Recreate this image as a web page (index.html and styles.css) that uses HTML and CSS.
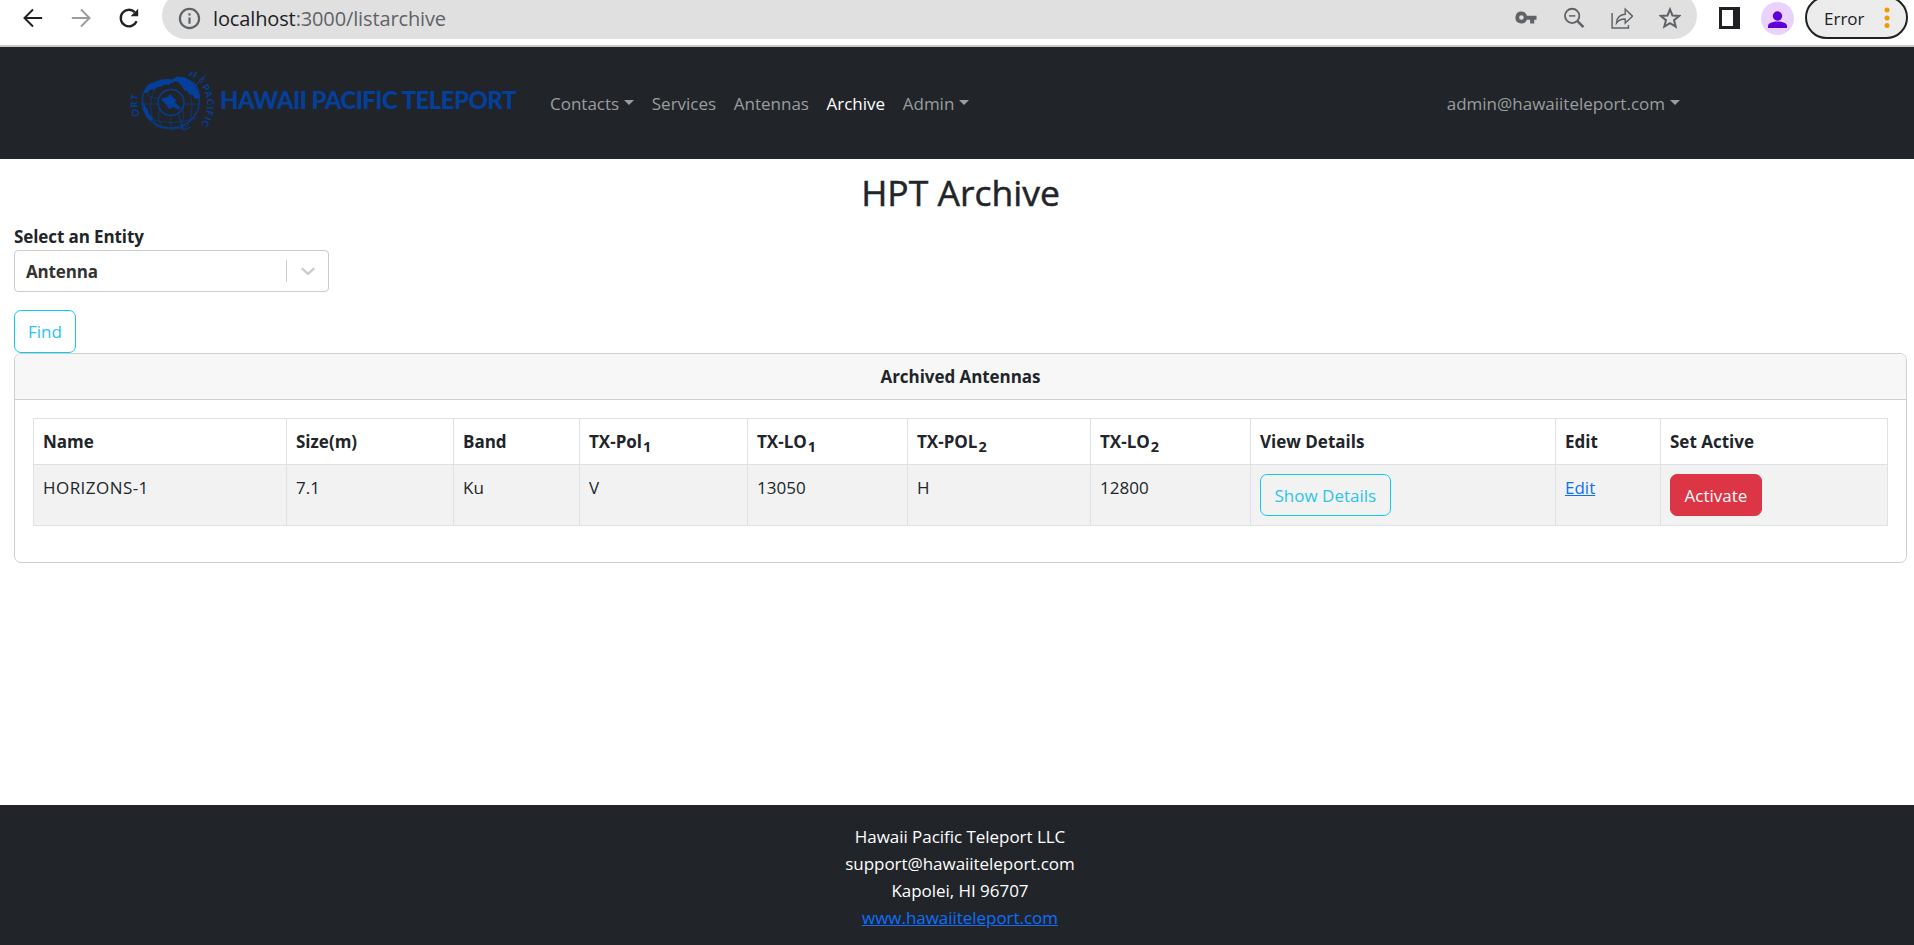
FILE: index.html
```html
<!DOCTYPE html>
<html lang="en">
<head>
<meta charset="utf-8">
<title>HPT Archive</title>
<link rel="stylesheet" href="styles.css">
</head>
<body>
<header class="browser-bar">
  <div class="browser-nav">
    <svg class="tool-icon" viewBox="0 0 24 24" fill="none" stroke="#202124" stroke-width="2.100"><path d="M22 12H3M12 2.700L2.700 12l9.300 9.300"/></svg>
    <svg class="tool-icon" viewBox="0 0 24 24" fill="none" stroke="#9b9c9e" stroke-width="2.100"><path d="M2 12h19M12 2.700l9.300 9.300-9.300 9.300"/></svg>
    <svg class="tool-icon" viewBox="0 0 24 24" fill="none" stroke="#202124" stroke-width="2.500"><path d="M20.300 15.500A9 9 0 1 1 18.300 5.600"/><path d="M22 1.800v8.200h-8.200z" fill="#202124" stroke="none"/></svg>
  </div>
  <div class="address">
    <svg class="info-icon" viewBox="0 0 24 24" fill="none" stroke="#5f6368" stroke-width="2.100"><circle cx="12" cy="12" r="9.200"/><path d="M12 11v6M12 7v2.200"/></svg>
    <span class="url"><span class="host">localhost</span>:3000/listarchive</span>
    <div class="address-tools">
      <svg class="tool-icon" viewBox="0 0 24 24"><path fill="#5f6368" fill-rule="evenodd" d="M7 5a6.500 6.500 0 1 0 6 9h3.500v4h4.500v-4h2.500V9.500H13A6.500 6.500 0 0 0 7 5zM7 9a2.500 2.500 0 1 1 0 5 2.500 2.500 0 0 1 0-5z"/></svg>
      <svg class="tool-icon" viewBox="0 0 24 24" fill="none" stroke="#5f6368" stroke-width="2"><circle cx="10" cy="9.700" r="7.800"/><path d="M15.500 15.200l6.800 6.800" stroke-width="2.800"/><path d="M6.500 9.700h7" stroke-width="1.600"/></svg>
      <svg class="tool-icon" viewBox="0 0 24 24" fill="none" stroke="#5f6368" stroke-width="1.600"><path d="M1.200 6.500V23H19v-3.500"/><path d="M6 17.500c.3-5.500 3-9 9.500-9.500V2.500L23.500 10l-8 7.500v-4.300c-4.500-.2-7.200 1.200-9.500 4.300z"/></svg>
      <svg class="tool-icon" viewBox="0 0 24 24" fill="none" stroke="#5f6368" stroke-width="2.200"><path d="M12 2.500l2.700 6.700 7.300.6-5.600 4.600 1.800 7.100-6.200-3.800-6.200 3.800 1.800-7.100L2 9.800l7.300-.6z"/></svg>
    </div>
  </div>
  <svg class="panel-icon" viewBox="0 0 21 22"><path fill="#202124" fill-rule="evenodd" d="M0 0h21v22H0zM3 3v16h11V3z"/></svg>
  <svg class="avatar" viewBox="0 0 33 33"><circle cx="16.500" cy="16.500" r="16.500" fill="#e9d2fd"/><circle cx="16.500" cy="14" r="4.700" fill="#6200d9"/><path fill="#6200d9" d="M7 26v-2c0-3 5-4.500 9.500-4.500s9.500 1.500 9.500 4.500v2z"/></svg>
  <div class="error-chip"><span>Error</span><svg class="dots" viewBox="0 0 6 22" fill="#f29900"><circle cx="3" cy="3" r="2.500"/><circle cx="3" cy="11" r="2.500"/><circle cx="3" cy="18.500" r="2.500"/></svg></div>
</header>

<nav class="navbar">
  <a class="brand">
    <svg class="globe" viewBox="130 70 84 68" fill="none" stroke="#043f9b">
      <defs>
        <path id="ring-right" d="M200.800 86A33 33 0 0 1 185 136.500"/>
        <path id="ring-left" d="M140.500 116.500A32 32 0 0 1 140.500 90"/>
      </defs>
      <path d="M145 90A28.500 26.500 0 1 0 198 94" stroke-width="1.200"/>
      <path d="M193 82Q199 88 199.500 98" stroke-width="1.200"/>
      <g stroke-width=".6">
        <path d="M143 104h15M184 104h15M147 95q6 4 13 3M147 118q24 9 49 0M155 126q17 6 33 0M171 117v13.500M159 110q-2 9 4 19M155 88q-9 18 0 37M183 110q2 9-2 20M190 94q5 15-2 31"/>
      </g>
      <g fill="#043f9b" stroke="none">
        <path d="M144 93l1.500-5 3.200-4 6-2 5-2 6-1 9 .5-1 3-4 1-1 2-4-1-3 2-4 .5-3 2-5 1-2 3z"/>
        <path d="M173 79l4-2.500 8 1 5 2.500 4 4 4 8 0 6-3 1-2-4-4-1-2-3-3-1-3-5-3-3-5-1z"/>
        <path d="M143 100l2 6 3 4 1 4 3 3 0 4-5-3-3-7z"/>
        <path d="M188 76l3-4 2 0-3 4zM192.500 77l3-5 1.500.5-2.500 5z"/>
      </g>
      <path d="M194 87l6-6M202 79l4-4M179 115l4 15 8-3M202 77l2 3" stroke-width=".9"/>
      <circle cx="201" cy="80.500" r="1.500"/>
      <circle cx="171" cy="102.500" r="13" fill="#212529" stroke-width="1.300"/>
      <path fill="#043f9b" stroke="none" d="M161 99.500l2-1.500 3.500-.5 4-3.500 2 3 4 3-1.500 2.500 2.500 2.500 4 3.500-3.500 1-4-2-1-1-2 2.500-2.500-.5-1.500-3z"/>
      <g class="ring-text" fill="#043f9b" stroke="none">
        <text><textPath href="#ring-right" startOffset="1">PACIFIC</textPath></text>
        <text><textPath href="#ring-left" startOffset="1">ORT</textPath></text>
      </g>
    </svg>
    <span class="brand-name">HAWAII PACIFIC TELEPORT</span>
  </a>
  <ul class="menu">
    <li class="caret">Contacts</li><li>Services</li><li>Antennas</li><li class="active">Archive</li><li class="caret">Admin</li>
  </ul>
  <div class="account caret">admin@hawaiiteleport.com</div>
</nav>

<main class="content">
  <h1 class="title">HPT Archive</h1>
  <div class="label">Select an Entity</div>
  <div class="select">
    <span class="select-value">Antenna</span>
    <span class="select-toggle"><svg class="chevron" viewBox="0 0 20 20" fill="none" stroke="#ccc" stroke-width="2.200" stroke-linecap="round" stroke-linejoin="round"><path d="M5 8l5 4.600L15 8"/></svg></span>
  </div>
  <button class="btn btn-info btn-find">Find</button>
  <section class="card">
    <div class="card-header">Archived Antennas</div>
    <div class="card-body">
      <table class="table">
        <colgroup><col class="c-name"><col class="c-size"><col class="c-band"><col class="c-pol1"><col class="c-lo"><col class="c-pol2"><col class="c-lo"><col class="c-view"><col class="c-edit"><col></colgroup>
        <thead>
          <tr><th>Name</th><th>Size(m)</th><th>Band</th><th>TX-Pol<sub>1</sub></th><th>TX-LO<sub>1</sub></th><th>TX-POL<sub>2</sub></th><th>TX-LO<sub>2</sub></th><th>View Details</th><th>Edit</th><th>Set Active</th></tr>
        </thead>
        <tbody>
          <tr><td class="name-cell">HORIZONS-1</td><td>7.1</td><td>Ku</td><td>V</td><td>13050</td><td>H</td><td>12800</td><td><button class="btn btn-info">Show Details</button></td><td><a class="link">Edit</a></td><td><button class="btn btn-danger">Activate</button></td></tr>
        </tbody>
      </table>
    </div>
  </section>
</main>

<footer class="footer">
  <div>Hawaii Pacific Teleport LLC</div>
  <div>support@hawaiiteleport.com</div>
  <div>Kapolei, HI 96707</div>
  <div><a class="link">www.hawaiiteleport.com</a></div>
</footer>
</body>
</html>
```

FILE: styles.css
```css
* { box-sizing: border-box; }

body {
  margin: 0;
  height: 945px;
  display: flex;
  flex-direction: column;
  overflow: hidden;
  background: #fff;
  color: #212529;
  font: 17px/27px "Open Sans", "Noto Sans", sans-serif;
}

/* Browser toolbar */
.browser-bar {
  flex: none;
  display: flex;
  height: 47px;
  border-bottom: 2px solid #c6c9c7;
  overflow: hidden;
}
.browser-nav { display: flex; gap: 26px; width: 162px; padding: 7px 0 0 22px; }
.tool-icon { width: 22px; height: 22px; flex: none; }
.address {
  display: flex;
  width: 1535px;
  height: 47px;
  margin-top: -8px;
  padding: 15px 16px 0 15px;
  border-radius: 24px;
  background: #e0e0e0;
}
.info-icon { width: 25px; height: 25px; margin-top: -1px; }
.url { margin: -2px 0 0 11px; font-size: 20px; color: #5f6368; letter-spacing: -0.13px; }
.host { color: #202124; }
.address-tools { display: flex; gap: 26px; margin-left: auto; }
.panel-icon { width: 21px; height: 22px; margin: 7px 0 0 22px; }
.avatar { width: 33px; height: 33px; margin: 2px 0 0 21px; }
.error-chip {
  display: flex;
  justify-content: space-between;
  width: 103px;
  height: 43px;
  margin: -4px 0 0 11px;
  padding: 7px 16px 0 17px;
  border: 2px solid #202124;
  border-radius: 22px;
  background: #ececec;
  color: #202124;
}
.dots { width: 6px; height: 22px; margin-top: 2px; }

/* Site navigation */
.navbar {
  flex: none;
  display: flex;
  align-items: center;
  height: 112px;
  padding: 0 234px 0 130px;
  background: #212529;
  color: #9b9d9f;
}
.brand { display: flex; align-items: center; width: 420px; color: #043f9b; }
.globe { width: 84px; height: 68px; margin-top: 2px; overflow: visible; }
.ring-text { font: 700 9.5px "Lato", sans-serif; letter-spacing: 0.8px; }
.brand-name {
  margin: -7px 0 0 6px;
  font: 900 24px/30px "Lato", sans-serif;
  letter-spacing: -0.58px;
  white-space: nowrap;
}
.menu { display: flex; gap: 17.6px; margin: 0; padding: 0; list-style: none; }
.active { color: #fff; }
.account { margin-left: auto; }
.caret::after {
  content: "";
  display: inline-block;
  margin-left: 5px;
  vertical-align: 5px;
  border: 5px solid transparent;
  border-top-color: currentColor;
  border-bottom: 0;
}

/* Page content */
.content { padding: 12px 7px 0 14px; }
.title {
  margin: 0 0 9px;
  font-size: 35.5px;
  font-weight: 500;
  line-height: 43px;
  text-align: center;
  -webkit-text-stroke: 0.5px #212529;
}
.label { font-weight: 700; letter-spacing: -0.1px; }
.select {
  display: flex;
  align-items: center;
  justify-content: space-between;
  width: 315px;
  height: 42px;
  padding-left: 11px;
  border: 1px solid #ccc;
  border-radius: 4px;
  color: #333;
  font-weight: 700;
  letter-spacing: -0.15px;
}
.select-toggle { display: flex; padding: 0 9px 0 10px; border-left: 1px solid #ccc; }
.chevron { width: 22px; height: 22px; }

.btn {
  display: block;
  height: 42px;
  padding: 0 13.5px;
  border: 1px solid;
  border-radius: 7px;
  font: inherit;
  line-height: 27px;
}
.btn-info { border-color: #0dcaf0; background: transparent; color: #2bc4ea; }
.btn-danger { border-color: #dc3545; background: #dc3545; color: #fff; }
.btn-find { height: 43px; margin-top: 18px; padding: 0 13px; }

.card { border: 1px solid #cfcfcf; border-radius: 7px; overflow: hidden; }
.card-header {
  padding: 9px 18px;
  border-bottom: 1px solid #cfcfcf;
  background: #f7f7f7;
  font-weight: 700;
  letter-spacing: -0.05px;
  text-align: center;
}
.card-body { padding: 18px; }
.table { width: 100%; margin-bottom: 18px; border-collapse: collapse; table-layout: fixed; }
.table th, .table td {
  padding: 9px;
  border: 1px solid #dee2e6;
  text-align: left;
  vertical-align: top;
}
.table th { letter-spacing: 0; }
.table td { background: #f2f2f2; }
.table .name-cell { letter-spacing: 0.45px; }
.table sub { position: relative; bottom: -0.25em; margin-left: 1px; font-size: 0.85em; line-height: 0; vertical-align: baseline; }
.c-name { width: 253px; }
.c-size { width: 167px; }
.c-band { width: 126px; }
.c-pol1 { width: 168px; }
.c-lo { width: 160px; }
.c-pol2 { width: 183px; }
.c-view { width: 305px; }
.c-edit { width: 105px; }
.link { color: #0d6efd; text-decoration: underline; }

.footer {
  flex: none;
  height: 140px;
  margin-top: auto;
  padding: 18px 0 0 6px;
  background: #212529;
  color: #fff;
  letter-spacing: -0.04px;
  text-align: center;
}
```
